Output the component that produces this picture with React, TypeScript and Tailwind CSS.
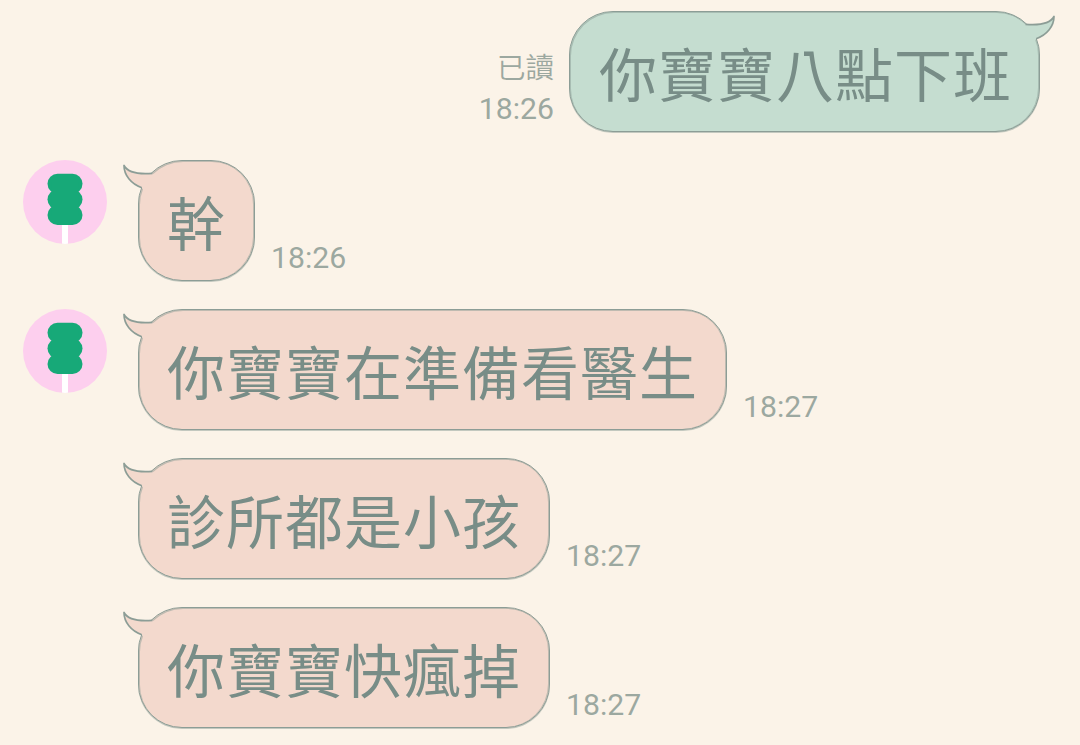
import type { ReactNode } from "react";

type Side = "left" | "right";

type Message = {
  id: number;
  side: Side;
  text: string;
  time: string;
  read?: boolean;
  avatar?: boolean;
};

const MESSAGES: Message[] = [
  { id: 1, side: "right", text: "你寶寶八點下班", time: "18:26", read: true },
  { id: 2, side: "left", text: "幹", time: "18:26", avatar: true },
  { id: 3, side: "left", text: "你寶寶在準備看醫生", time: "18:27", avatar: true },
  { id: 4, side: "left", text: "診所都是小孩", time: "18:27" },
  { id: 5, side: "left", text: "你寶寶快瘋掉", time: "18:27" },
];

function Avatar() {
  return (
    <svg width="84" height="84" viewBox="0 0 84 84" className="block">
      <defs>
        <clipPath id="avatar-clip">
          <circle cx="42" cy="42" r="42" />
        </clipPath>
      </defs>
      <g clipPath="url(#avatar-clip)">
        <rect width="84" height="84" fill="#fdcfee" />
        <rect x="39" y="60" width="6" height="24" fill="#fff" />
        <g fill="#17a978">
          <rect x="24.5" y="13.7" width="35" height="20" rx="10" />
          <rect x="24.5" y="29.5" width="35" height="20" rx="10" />
          <rect x="24.5" y="45" width="35" height="20" rx="10" />
          <rect x="28.5" y="22" width="27" height="34" />
        </g>
      </g>
    </svg>
  );
}

/** Little horn on the top outer corner; the fill also hides the bubble's border below it. */
function Tail({ side }: { side: Side }) {
  const fill = side === "left" ? "#f3d9cd" : "#c5ddd0";
  return (
    <svg
      width="34"
      height="34"
      viewBox="0 0 34 34"
      className={side === "left" ? "absolute -top-px -left-[17px]" : "absolute -top-px -right-[17px] -scale-x-100"}
    >
      <path d="M2 5.5 C6 13 16 14.5 30.5 13.3 L33 15 L22 31 L19.8 27.7 C9 24 2 15 2 5.5 Z" fill={fill} />
      <path
        d="M30.5 13.3 C16 14.5 6 13 2 5.5 C2 15 9 24 19.8 27.7"
        fill="none"
        stroke="#8c9d96"
        strokeWidth="1.7"
        strokeLinejoin="round"
      />
    </svg>
  );
}

function Bubble({ side, children }: { side: Side; children: ReactNode }) {
  return (
    <div
      className={`relative mb-px flex h-[121px] items-center rounded-[44px] border border-[#8c9d96] text-[58px] leading-[60px] tracking-[1px] whitespace-nowrap text-[#788d87] shadow-[inset_1px_1px_0_rgba(140,157,150,0.5),inset_-1px_0_0_rgba(140,157,150,0.5),0_1px_0_rgba(140,157,150,0.5)] ${
        side === "left" ? "bg-[#f3d9cd] pr-[28px] pl-[28px]" : "bg-[#c5ddd0] pr-[27px] pl-[29px]"
      }`}
    >
      <Tail side={side} />
      <span className="relative">{children}</span>
    </div>
  );
}

function Row({ message }: { message: Message }) {
  const { side, text, time, read, avatar } = message;
  return (
    <div className={side === "left" ? "flex items-end" : "flex flex-row-reverse items-end pr-10"}>
      {side === "left" && <div className="mr-[31px] ml-[23px] w-[84px] self-start">{avatar && <Avatar />}</div>}
      <Bubble side={side}>{text}</Bubble>
      <div
        className={`flex flex-col gap-[9px] pb-[7px] text-[#9ca8a0] ${side === "left" ? "ml-4 items-start" : "mr-[15px] items-end"}`}
      >
        {read && <span className="text-[28.5px] leading-[34px] font-[350]">已讀</span>}
        <span className="font-[Roboto] text-[30.2px] leading-[34px]">{time}</span>
      </div>
    </div>
  );
}

export default function App() {
  return (
    <main className="flex h-[745px] w-[1080px] flex-col gap-[27px] overflow-hidden bg-[#fbf3e8] pt-[11px] font-['Noto_Sans_CJK_TC',sans-serif]">
      {MESSAGES.map((m) => (
        <Row key={m.id} message={m} />
      ))}
    </main>
  );
}
